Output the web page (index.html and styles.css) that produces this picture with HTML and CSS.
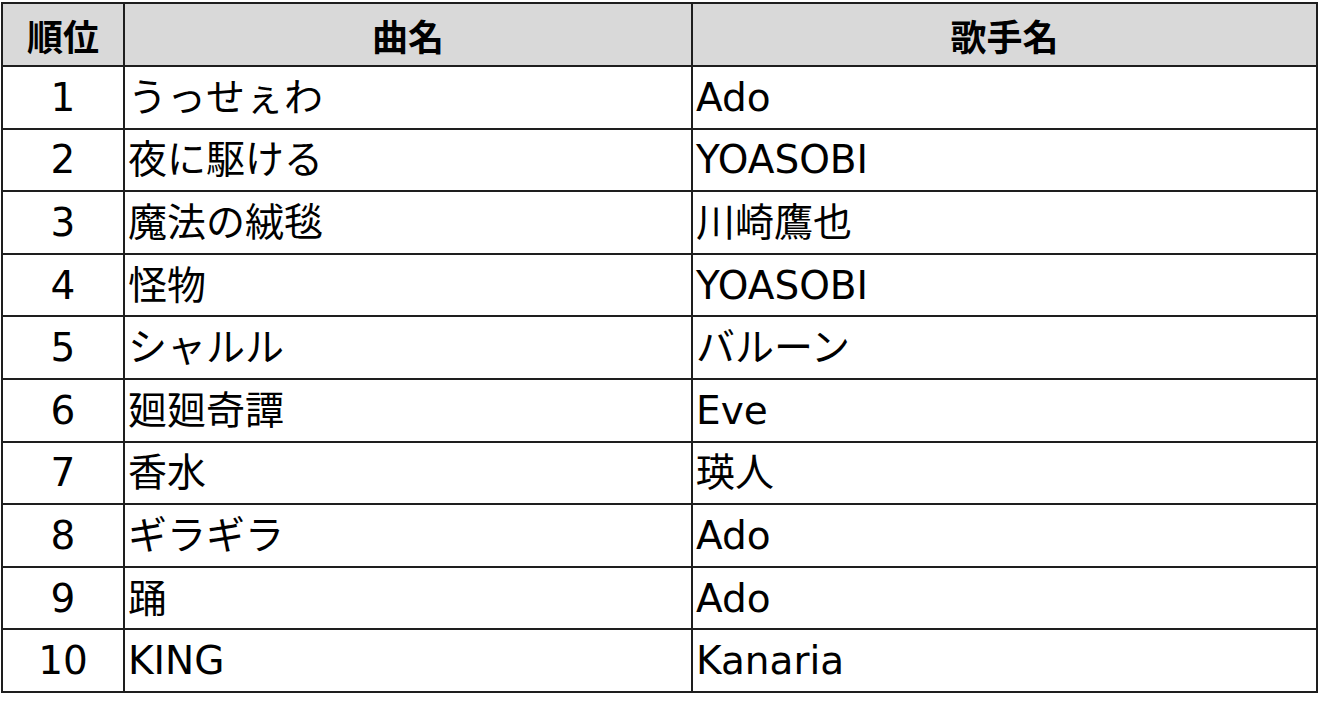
FILE: index.html
```html
<!DOCTYPE html>
<html lang="ja">
<head>
<meta charset="utf-8">
<title>ランキング</title>
<link rel="stylesheet" href="styles.css">
</head>
<body>
<div class="table">
  <div class="cell head">順位</div>
  <div class="cell head">曲名</div>
  <div class="cell head">歌手名</div>

  <div class="cell rank">1</div><div class="cell text">うっせぇわ</div><div class="cell text">Ado</div>
  <div class="cell rank">2</div><div class="cell text">夜に駆ける</div><div class="cell text">YOASOBI</div>
  <div class="cell rank">3</div><div class="cell text">魔法の絨毯</div><div class="cell text">川崎鷹也</div>
  <div class="cell rank">4</div><div class="cell text">怪物</div><div class="cell text">YOASOBI</div>
  <div class="cell rank">5</div><div class="cell text">シャルル</div><div class="cell text">バルーン</div>
  <div class="cell rank">6</div><div class="cell text">廻廻奇譚</div><div class="cell text">Eve</div>
  <div class="cell rank">7</div><div class="cell text">香水</div><div class="cell text">瑛人</div>
  <div class="cell rank">8</div><div class="cell text">ギラギラ</div><div class="cell text">Ado</div>
  <div class="cell rank">9</div><div class="cell text">踊</div><div class="cell text">Ado</div>
  <div class="cell rank">10</div><div class="cell text">KING</div><div class="cell text">Kanaria</div>
</div>
</body>
</html>
```
FILE: styles.css
```css
html, body {
  margin: 0;
  padding: 0;
  background: #ffffff;
}

body {
  padding: 2px 0 0 1px;
  font-family: "DejaVu Sans", "Noto Sans CJK JP", sans-serif;
  font-size: 39px;
  color: #000;
}

.table {
  display: grid;
  width: max-content;
  grid-template-columns: 122px 568px 625px;
  grid-template-rows: 63px repeat(10, 62.6px);
  border-top: 2px solid #1e1e1e;
  border-left: 2px solid #1e1e1e;
}

.cell {
  box-sizing: border-box;
  border-right: 2px solid #1e1e1e;
  border-bottom: 2px solid #1e1e1e;
  display: flex;
  align-items: center;
  line-height: 1;
  white-space: nowrap;
  overflow: hidden;
}

.head {
  background: #d9d9d9;
  justify-content: center;
  font-weight: bold;
  font-family: "Noto Sans CJK JP", sans-serif;
  font-size: 36px;
}

.rank {
  justify-content: center;
}

.text {
  padding-left: 3px;
}
```
